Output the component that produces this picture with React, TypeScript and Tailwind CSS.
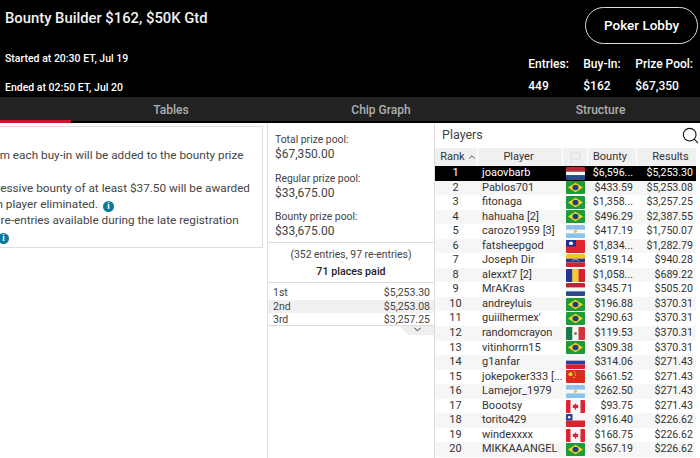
import { ChevronDown, ChevronUp, Flag as FlagIcon, Search } from 'lucide-react';

type Country = 'nl' | 'br' | 'ar' | 'tw' | 've' | 'ro' | 'mx' | 'ru' | 'cn' | 'ca' | 'cl';

const PLAYERS: { name: string; country: Country; bounty: string; result: string }[] = [
  { name: 'joaovbarb', country: 'nl', bounty: '$6,596...', result: '$5,253.30' },
  { name: 'Pablos701', country: 'br', bounty: '$433.59', result: '$5,253.08' },
  { name: 'fitonaga', country: 'br', bounty: '$1,358...', result: '$3,257.25' },
  { name: 'hahuaha [2]', country: 'br', bounty: '$496.29', result: '$2,387.55' },
  { name: 'carozo1959 [3]', country: 'ar', bounty: '$417.19', result: '$1,750.07' },
  { name: 'fatsheepgod', country: 'tw', bounty: '$1,834...', result: '$1,282.79' },
  { name: 'Joseph Dir', country: 've', bounty: '$519.14', result: '$940.28' },
  { name: 'alexxt7 [2]', country: 'ro', bounty: '$1,058...', result: '$689.22' },
  { name: 'MrAKras', country: 'nl', bounty: '$345.71', result: '$505.20' },
  { name: 'andreyluis', country: 'br', bounty: '$196.88', result: '$370.31' },
  { name: "guiilhermex'", country: 'br', bounty: '$290.63', result: '$370.31' },
  { name: 'randomcrayon', country: 'mx', bounty: '$119.53', result: '$370.31' },
  { name: 'vitinhorrn15', country: 'br', bounty: '$309.38', result: '$370.31' },
  { name: 'g1anfar', country: 'ru', bounty: '$314.06', result: '$271.43' },
  { name: 'jokepoker333 [...', country: 'cn', bounty: '$661.52', result: '$271.43' },
  { name: 'Lamejor_1979', country: 'ar', bounty: '$262.50', result: '$271.43' },
  { name: 'Boootsy', country: 'ca', bounty: '$93.75', result: '$271.43' },
  { name: 'torito429', country: 'cl', bounty: '$916.40', result: '$226.62' },
  { name: 'windexxxx', country: 'ca', bounty: '$168.75', result: '$226.62' },
  { name: 'MIKKAAANGEL', country: 'br', bounty: '$567.19', result: '$226.62' },
];

const PAYOUTS = [
  ['1st', '$5,253.30'],
  ['2nd', '$5,253.08'],
  ['3rd', '$3,257.25'],
];

const POOLS = [
  ['Total prize pool:', '$67,350.00'],
  ['Regular prize pool:', '$33,675.00'],
  ['Bounty prize pool:', '$33,675.00'],
];

const ROW_COLS = 'grid grid-cols-[43px_85px_25px_49px_59px] w-[261px]';

function CountryFlag({ country }: { country: Country }) {
  return (
    <svg width="19" height="13" viewBox="0 0 19 14" preserveAspectRatio="none" className="block rounded-[1px]">
      {country === 'nl' && (
        <>
          <rect width="19" height="5" fill="#b5283a" />
          <rect y="5" width="19" height="4" fill="#f7f7f7" />
          <rect y="9" width="19" height="5" fill="#2a4a8e" />
        </>
      )}
      {country === 'br' && (
        <>
          <rect width="19" height="14" fill="#1f9a3b" />
          <path d="M9.5 2 17 7l-7.5 5L2 7z" fill="#f4d81c" />
          <circle cx="9.5" cy="7" r="3" fill="#1f3f88" />
        </>
      )}
      {country === 'ar' && (
        <>
          <rect width="19" height="14" fill="#8fc2ea" />
          <rect y="5" width="19" height="4" fill="#f7f7f7" />
          <circle cx="9.5" cy="7" r="1.5" fill="#eeb84a" />
        </>
      )}
      {country === 'tw' && (
        <>
          <rect width="19" height="14" fill="#e0242c" />
          <rect width="10" height="7" fill="#1d2f8c" />
          <circle cx="5" cy="3.5" r="2" fill="#f7f7f7" />
        </>
      )}
      {country === 've' && (
        <>
          <rect width="19" height="5" fill="#f2c81e" />
          <rect y="5" width="19" height="4" fill="#27378f" />
          <rect y="9" width="19" height="5" fill="#d3232f" />
          <path d="M6 7.5Q9.5 4 13 7.5" fill="none" stroke="#c6cbe6" strokeWidth="0.8" />
        </>
      )}
      {country === 'ro' && (
        <>
          <rect width="6.5" height="14" fill="#22368f" />
          <rect x="6.5" width="6" height="14" fill="#f6cf1e" />
          <rect x="12.5" width="6.5" height="14" fill="#d5202f" />
        </>
      )}
      {country === 'mx' && (
        <>
          <rect width="6.5" height="14" fill="#157a4a" />
          <rect x="6.5" width="6" height="14" fill="#f7f7f7" />
          <rect x="12.5" width="6.5" height="14" fill="#d2323c" />
          <circle cx="9.5" cy="7" r="1.5" fill="#9a7a4a" />
        </>
      )}
      {country === 'ru' && (
        <>
          <rect width="19" height="5" fill="#f5f5f5" />
          <rect y="5" width="19" height="4" fill="#2a3f9a" />
          <rect y="9" width="19" height="5" fill="#d3232f" />
        </>
      )}
      {country === 'cn' && (
        <>
          <rect width="19" height="14" fill="#dc2a1e" />
          <circle cx="4.5" cy="4.5" r="2" fill="#f6d61e" />
          <circle cx="8.5" cy="2" r="0.7" fill="#f6d61e" />
          <circle cx="9.5" cy="4" r="0.7" fill="#f6d61e" />
          <circle cx="9.5" cy="6" r="0.7" fill="#f6d61e" />
          <circle cx="8" cy="8" r="0.7" fill="#f6d61e" />
        </>
      )}
      {country === 'ca' && (
        <>
          <rect width="19" height="14" fill="#f7f7f7" />
          <rect width="4.5" height="14" fill="#de2430" />
          <rect x="14.5" width="4.5" height="14" fill="#de2430" />
          <path d="M9.5 3.5 10.6 5.5 12.5 5.2 11.8 7.5 12.5 8.5 10 9 10 10.5 9 10.5 9 9 6.5 8.5 7.2 7.5 6.5 5.2 8.4 5.5z" fill="#de2430" />
        </>
      )}
      {country === 'cl' && (
        <>
          <rect width="19" height="7" fill="#f7f7f7" />
          <rect y="7" width="19" height="7" fill="#d9242e" />
          <rect width="6.5" height="7" fill="#22409a" />
          <circle cx="3.2" cy="3.5" r="1.3" fill="#f7f7f7" />
        </>
      )}
    </svg>
  );
}

function InfoDot() {
  return (
    <span className="inline-flex w-[11px] h-[11px] rounded-full bg-[#0b7a9b] text-white text-[9px] font-bold leading-none items-center justify-center align-[-1px] ml-[5px]">
      i
    </span>
  );
}

export default function App() {
  return (
    <div className="w-[700px] h-[458px] overflow-hidden bg-white text-[#333] font-['Roboto',sans-serif]">
      <header className="h-[97px] bg-black text-white flex justify-between">
        <div className="pl-[5px] pt-[7px] flex flex-col">
          <h1 className="text-[14.8px] leading-[22px] font-medium text-[#f2f2f2]">Bounty Builder $162, $50K Gtd</h1>
          <p className="text-[10.5px] leading-[14px] font-medium mt-[23px]">Started at 20:30 ET, Jul 19</p>
          <p className="text-[10.5px] leading-[14px] font-medium mt-[15px]">Ended at 02:50 ET, Jul 20</p>
        </div>
        <div className="flex flex-col items-end pr-[2px] pt-[7px]">
          <button className="w-[113px] h-[37px] shrink-0 rounded-full border border-[#ddd] text-[13.5px] font-medium">Poker Lobby</button>
          <div className="flex gap-[14px] mt-[13px] pr-[5px] text-[12px] font-medium leading-[15px] whitespace-nowrap">
            <div className="w-[41px]">
              <div>Entries:</div>
              <div className="mt-[7px]">449</div>
            </div>
            <div className="w-[38px]">
              <div>Buy-In:</div>
              <div className="mt-[7px]">$162</div>
            </div>
            <div>
              <div>Prize Pool:</div>
              <div className="mt-[7px]">$67,350</div>
            </div>
          </div>
        </div>
      </header>

      <nav className="h-[26px] bg-[#222] border-b-2 border-black text-[#b0b0b0] text-[12px] font-medium flex">
        <div className="w-[71px] h-[26px] shrink-0 border-b-[3px] border-[#d0112b]" />
        <div className="w-[200px] text-center leading-[26px]">Tables</div>
        <div className="w-[220px] text-center leading-[26px]">Chip Graph</div>
        <div className="w-[209px] text-center leading-[26px]">
          <span className="relative left-[5px]">Structure</span>
        </div>
      </nav>

      <main className="flex h-[335px]">
        <section className="w-[267px] pt-[3px] pr-[4px] shrink-0">
          <div className="h-[122px] border border-l-0 border-[#ddd] overflow-hidden pt-[20px] text-[11.75px] leading-[16px] text-[#444]">
            <div className="ml-[-15px] whitespace-nowrap">from each buy-in will be added to the bounty prize</div>
            <div className="h-[17px]" />
            <div className="ml-[-38px] whitespace-nowrap">A progressive bounty of at least $37.50 will be awarded</div>
            <div className="ml-[-40px] whitespace-nowrap">
              for each player eliminated.
              <InfoDot />
            </div>
            <div className="ml-[-52px] whitespace-nowrap">Unlimited re-entries available during the late registration</div>
            <div className="ml-[-7px]">
              <InfoDot />
            </div>
          </div>
        </section>

        <section className="w-[168px] shrink-0 border-x border-[#ddd] flex flex-col text-[#444]">
          <div className="h-[120px] shrink-0 border-b border-[#ddd] pl-[7px] pt-[9px]">
            {POOLS.map(([label, amount]) => (
              <div key={label} className="mb-[8.5px]">
                <div className="text-[10.4px] leading-[15px]">{label}</div>
                <div className="text-[12px] leading-[15px]">{amount}</div>
              </div>
            ))}
          </div>
          <div className="h-[40px] shrink-0 border-b border-[#ddd] text-center pt-[4px]">
            <div className="text-[10.4px] leading-[16px]">(352 entries, 97 re-entries)</div>
            <div className="text-[10.7px] leading-[18px] font-medium text-[#222]">71 places paid</div>
          </div>
          <div className="h-[43px] shrink-0 border-b border-[#ddd] pt-[3px]">
            {PAYOUTS.map(([place, amount], i) => (
              <div key={place} className={`flex justify-between h-[13.5px] pl-[5px] pr-[4px] text-[10.5px] leading-[13.5px] ${i === 1 ? 'bg-[#f0f0f0]' : ''}`}>
                <span>{place}</span>
                <span>{amount}</span>
              </div>
            ))}
          </div>
          <div className="flex justify-end">
            <div className="w-[34px] h-[9px] bg-[#eee] [clip-path:polygon(0_0,100%_0,100%_100%,25%_100%)] flex justify-center">
              <ChevronDown size={11} strokeWidth={2} className="text-[#222] mt-[-2px]" />
            </div>
          </div>
        </section>

        <section className="flex-1 min-w-0 flex flex-col">
          <div className="h-[25px] shrink-0 flex items-center justify-between pl-[7px]">
            <span className="text-[12.5px] text-[#444]">Players</span>
            <Search size={19} strokeWidth={1.4} className="text-[#111] shrink-0" />
          </div>
          <div className={`${ROW_COLS} h-[18px] shrink-0 bg-[#f0f0f0] text-[11px] text-[#333] leading-[18px]`}>
            <div className="flex items-center justify-center gap-[2px] pl-[5px] border-r border-white">
              Rank
              <ChevronUp size={10} strokeWidth={2} />
            </div>
            <div className="text-center pr-[3px] border-r border-white">Player</div>
            <div className="flex items-center justify-center border-r border-white">
              <FlagIcon size={13} strokeWidth={1.5} className="text-[#d8d8d8]" />
            </div>
            <div className="text-center pr-[4px] border-r border-white">Bounty</div>
            <div className="text-center pl-[8px]">Results</div>
          </div>
          {PLAYERS.map((player, i) => (
            <div
              key={player.name}
              className={`${ROW_COLS} h-[14.55px] shrink-0 leading-[14.55px] ${
                i === 0 ? 'bg-black text-white' : i % 2 === 1 ? 'bg-[#f6f6f6] text-[#333]' : 'bg-white text-[#333]'
              }`}
            >
              <div className="text-center pr-[2px] text-[11px]">{i + 1}</div>
              <div className="pl-[4px] whitespace-nowrap overflow-hidden text-[11px]">{player.name}</div>
              <div className="flex items-center justify-center">
                <CountryFlag country={player.country} />
              </div>
              <div className="text-right pr-[4px] text-[10.6px]">{player.bounty}</div>
              <div className="text-right pr-[3px] text-[10.6px]">{player.result}</div>
            </div>
          ))}
        </section>
      </main>
    </div>
  );
}
